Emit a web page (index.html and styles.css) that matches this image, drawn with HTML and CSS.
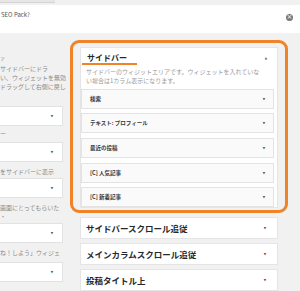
FILE: index.html
```html
<!DOCTYPE html>
<html lang="ja">
<head>
    <meta charset="UTF-8">
    <meta name="viewport" content="width=device-width, initial-scale=1.0">
    <title>ウィジェット</title>
    <link rel="stylesheet" href="styles.css">
</head>
<body>
    <div class="top">
        <div class="top-field"></div>
    </div>
    <div class="notice">
        <span class="notice-text">SEO Pack?</span>
        <span class="dismiss">&times;</span>
    </div>
    <div class="main">
        <div class="available">
            <div class="cut">ァ</div>
            <div class="desc">
                <div>サイドバーにドラ</div>
                <div>い、ウィジェットを無効</div>
                <div>ドラッグして右側に戻し</div>
            </div>
            <div class="select s1"><span class="arrow">&#9660;</span></div>
            <div class="label l1">ー</div>
            <div class="select s2"><span class="arrow">&#9660;</span></div>
            <div class="label l2">をサイドバーに表示</div>
            <div class="select s3"><span class="arrow">&#9660;</span></div>
            <div class="label l2">画面にとってもらいた<br>・</div>
            <div class="select s3"><span class="arrow">&#9660;</span></div>
            <div class="label l2">ね！しよう」ウィジェ</div>
            <div class="select s4"><span class="arrow">&#9660;</span></div>
        </div>
        <div class="areas">
            <div class="highlight">
                <div class="area">
                    <div class="area-head">
                        <span class="area-title">サイドバー</span>
                        <span class="arrow up">&#9650;</span>
                    </div>
                    <div class="area-desc">サイドバーのウィジットエリアです。ウィジェットを入れていな<br>い場合は1カラム表示になります。</div>
                    <div class="widgets">
                        <div class="widget"><span>検索</span><span class="arrow">&#9660;</span></div>
                        <div class="widget"><span>テキスト: プロフィール</span><span class="arrow">&#9660;</span></div>
                        <div class="widget"><span>最近の投稿</span><span class="arrow">&#9660;</span></div>
                        <div class="widget"><span>[C] 人気記事</span><span class="arrow">&#9660;</span></div>
                        <div class="widget"><span>[C] 新着記事</span><span class="arrow">&#9660;</span></div>
                    </div>
                </div>
            </div>
            <div class="closed"><span>サイドバースクロール追従</span><span class="arrow">&#9660;</span></div>
            <div class="closed"><span>メインカラムスクロール追従</span><span class="arrow">&#9660;</span></div>
            <div class="closed"><span>投稿タイトル上</span><span class="arrow">&#9660;</span></div>
        </div>
    </div>
</body>
</html>
```

FILE: styles.css
```css
body {
    margin: 0;
    width: 300px;
    height: 291px;
    overflow: hidden;
    background: #f1f1f1;
    font-family: "Noto Sans CJK JP", "Noto Sans", sans-serif;
    color: #23282d;
}
.top {
    height: 5px;
}
.top-field {
    width: 55px;
    height: 2px;
    background: #e6e6e6;
    border-bottom: 1px solid #d4d4d4;
}
.notice {
    height: 28px;
    background: #fff;
    display: flex;
    justify-content: space-between;
    align-items: flex-start;
    padding-top: 6px;
    box-sizing: border-box;
}
.notice-text {
    font-size: 6px;
    line-height: 8px;
    color: #555;
    margin-left: 1px;
}
.dismiss {
    width: 7px;
    height: 7px;
    border-radius: 50%;
    background: #777;
    color: #fff;
    font-family: "DejaVu Sans", sans-serif;
    font-size: 7px;
    line-height: 7px;
    text-align: center;
    margin-right: 7px;
    margin-top: 3px;
}
.main {
    display: flex;
    gap: 7px;
}
.available {
    width: 63px;
    flex-shrink: 0;
    font-size: 6px;
    color: #8a8a8a;
}
.cut {
    margin-top: 20px;
    line-height: 9px;
    font-size: 5px;
}
.desc {
    margin-top: 1.5px;
    line-height: 9px;
    white-space: nowrap;
}
.select {
    height: 20px;
    background: #fff;
    border: 1px solid #e2e2e2;
    border-left: none;
    box-sizing: border-box;
    display: flex;
    justify-content: flex-end;
    align-items: center;
    padding-right: 9px;
}
.s1 { margin-top: 15.5px; }
.s2 { margin-top: 4.5px; }
.s3 { margin-top: 2.5px; }
.s4 { margin-top: 5.5px; }
.label {
    line-height: 9px;
    white-space: nowrap;
    overflow: hidden;
}
.l1 { margin-top: 2.5px; }
.l2 { margin-top: 4.5px; }
.arrow {
    font-family: "DejaVu Sans", sans-serif;
    font-size: 3px;
    color: #555;
}
.areas {
    width: 218px;
    flex-shrink: 0;
    padding-top: 7px;
}
.highlight {
    border: 3px solid #f08328;
    border-radius: 9px;
    padding: 4px 7px 2px 7px;
}
.area {
    width: 198px;
    height: 161px;
    background: #fff;
    border: 1px solid #e5e5e5;
    box-sizing: border-box;
}
.area-head {
    display: flex;
    justify-content: space-between;
    align-items: flex-start;
    padding: 4px 10px 0 1px;
}
.area-title {
    font-size: 8px;
    font-weight: bold;
    line-height: 11px;
    padding: 0 10px 0 5px;
    border-bottom: 2px solid #f08328;
}
.area-head .arrow {
    margin-top: 4px;
}
.area-desc {
    margin: 1.5px 0 0 5px;
    font-size: 6px;
    line-height: 9px;
    color: #9a9a9a;
    white-space: nowrap;
}
.widgets {
    margin-top: 4px;
    padding: 0 3px 0 0;
    display: flex;
    flex-direction: column;
    gap: 4.7px;
}
.widget {
    height: 20px;
    background: #fafafa;
    border: 1px solid #e3e3e3;
    box-sizing: border-box;
    display: flex;
    justify-content: space-between;
    align-items: center;
    padding: 0 8px 0 8px;
    font-size: 5.5px;
    font-weight: bold;
    color: #32373c;
}
.closed {
    width: 198px;
    height: 22px;
    margin: 4px 0 0 10px;
    background: #fff;
    border: 1px solid #e5e5e5;
    box-sizing: border-box;
    display: flex;
    justify-content: space-between;
    align-items: center;
    padding: 0 11px 0 5px;
    font-size: 8.5px;
    font-weight: bold;
}
```
